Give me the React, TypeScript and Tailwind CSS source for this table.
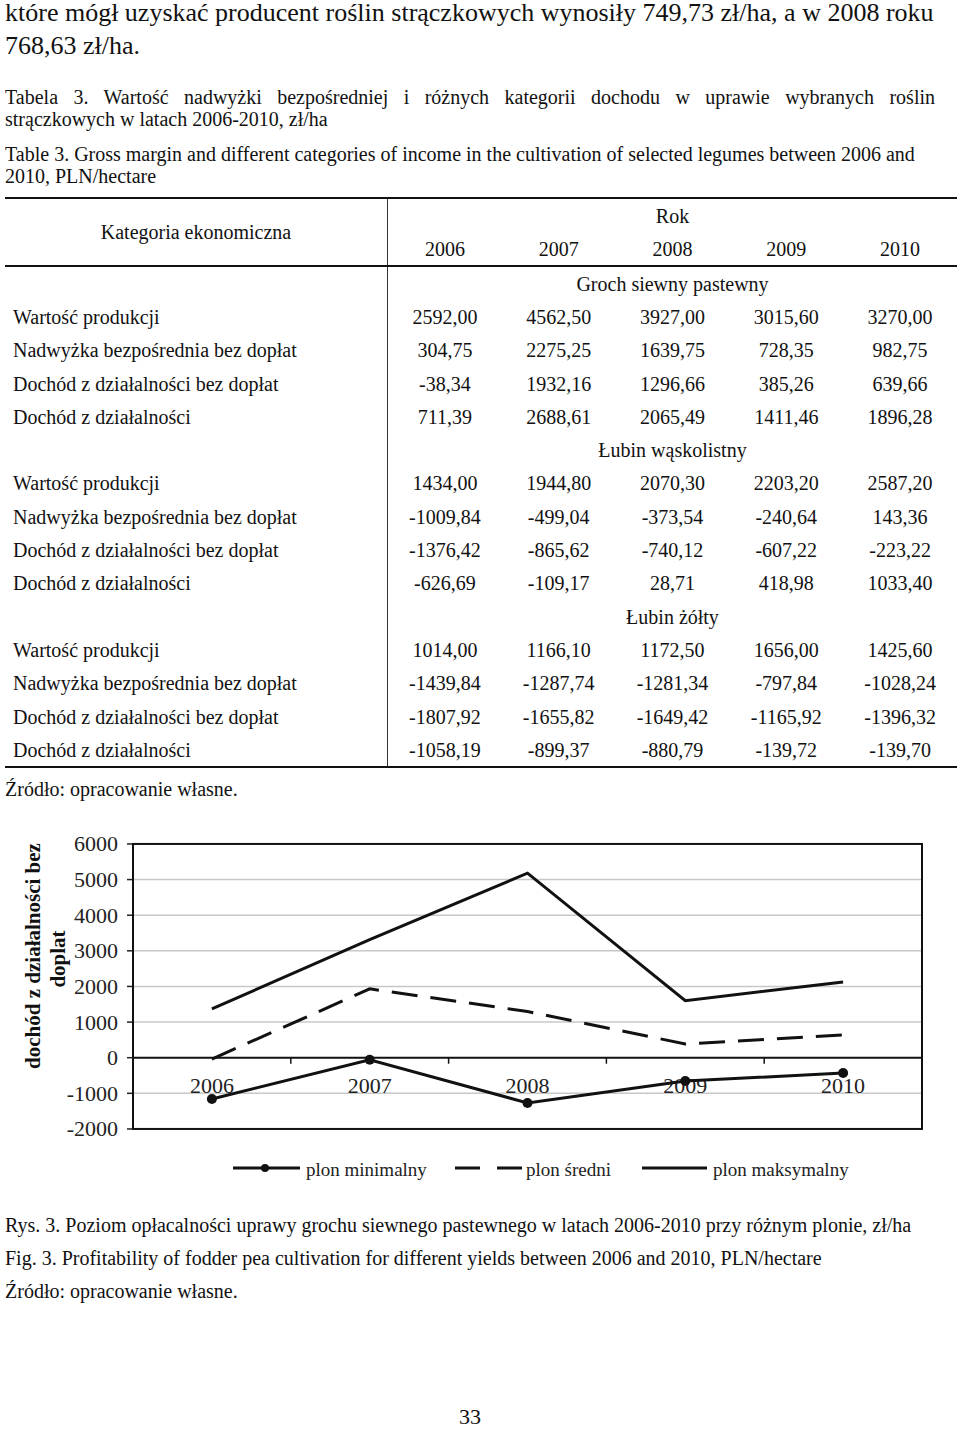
import React from "react";

const groups: { title: string; rows: string[][] }[] = [
  {
    title: "Groch siewny pastewny",
    rows: [
      ["Wartość produkcji", "2592,00", "4562,50", "3927,00", "3015,60", "3270,00"],
      ["Nadwyżka bezpośrednia bez dopłat", "304,75", "2275,25", "1639,75", "728,35", "982,75"],
      ["Dochód z działalności bez dopłat", "-38,34", "1932,16", "1296,66", "385,26", "639,66"],
      ["Dochód z działalności", "711,39", "2688,61", "2065,49", "1411,46", "1896,28"],
    ],
  },
  {
    title: "Łubin wąskolistny",
    rows: [
      ["Wartość produkcji", "1434,00", "1944,80", "2070,30", "2203,20", "2587,20"],
      ["Nadwyżka bezpośrednia bez dopłat", "-1009,84", "-499,04", "-373,54", "-240,64", "143,36"],
      ["Dochód z działalności bez dopłat", "-1376,42", "-865,62", "-740,12", "-607,22", "-223,22"],
      ["Dochód z działalności", "-626,69", "-109,17", "28,71", "418,98", "1033,40"],
    ],
  },
  {
    title: "Łubin żółty",
    rows: [
      ["Wartość produkcji", "1014,00", "1166,10", "1172,50", "1656,00", "1425,60"],
      ["Nadwyżka bezpośrednia bez dopłat", "-1439,84", "-1287,74", "-1281,34", "-797,84", "-1028,24"],
      ["Dochód z działalności bez dopłat", "-1807,92", "-1655,82", "-1649,42", "-1165,92", "-1396,32"],
      ["Dochód z działalności", "-1058,19", "-899,37", "-880,79", "-139,72", "-139,70"],
    ],
  },
];

const years = ["2006", "2007", "2008", "2009", "2010"];

function Chart() {
  const left = 133;
  const right = 922;
  const y0 = 1058.7;
  const k = 285 / 8000;
  const yv = (v: number) => y0 - v * k;
  const cw = (right - left) / 5;
  const cx = (i: number) => left + cw * (i + 0.5);
  const maxS = [1368, 3315, 5180, 1600, 2126];
  const meanS = [-38, 1932, 1297, 385, 640];
  const minS = [-1160, -56, -1270, -655, -430];
  const pts = (s: number[]) => s.map((v, i) => `${cx(i)},${yv(v)}`).join(" ");
  const grid = [5000, 4000, 3000, 2000, 1000, -1000];
  const labels = [6000, 5000, 4000, 3000, 2000, 1000, 0, -1000, -2000];
  const font = "'Liberation Serif', 'Times New Roman', serif";
  return (
    <svg width="960" height="370" viewBox="0 825 960 370" className="block">
      {grid.map((g) => (
        <line key={g} x1={left} x2={right} y1={yv(g)} y2={yv(g)} stroke="#c8c8c8" strokeWidth="1.5" />
      ))}
      {labels.map((g) => (
        <line key={"t" + g} x1={left - 6} x2={left} y1={yv(g)} y2={yv(g)} stroke="#222" strokeWidth="1.5" />
      ))}
      <line x1={left} x2={right} y1={yv(0)} y2={yv(0)} stroke="#111" strokeWidth="2" />
      {[1, 2, 3, 4].map((i) => (
        <line key={"x" + i} x1={left + cw * i} x2={left + cw * i} y1={yv(0)} y2={yv(0) + 6} stroke="#111" strokeWidth="1.5" />
      ))}
      <rect x={left} y={yv(6000)} width={right - left} height={yv(-2000) - yv(6000)} fill="none" stroke="#111" strokeWidth="2" />
      {labels.map((g) => (
        <text key={"l" + g} x={118} y={yv(g)} textAnchor="end" dominantBaseline="central" fontFamily={font} fontSize="22" fill="#222">
          {g}
        </text>
      ))}
      {years.map((y, i) => (
        <text key={y} x={cx(i)} y={1086} textAnchor="middle" dominantBaseline="central" fontFamily={font} fontSize="22" fill="#222">
          {y}
        </text>
      ))}
      <polyline points={pts(maxS)} fill="none" stroke="#111" strokeWidth="3" strokeLinejoin="miter" />
      <polyline points={pts(meanS)} fill="none" stroke="#111" strokeWidth="3" strokeDasharray="26 13" />
      <polyline points={pts(minS)} fill="none" stroke="#111" strokeWidth="3" />
      {minS.map((v, i) => (
        <circle key={"c" + i} cx={cx(i)} cy={yv(v)} r="5" fill="#111" />
      ))}
      <text
        transform="translate(33 957) rotate(-90)"
        textAnchor="middle"
        dominantBaseline="central"
        fontFamily={font}
        fontSize="21"
        fontWeight="bold"
        fill="#111"
      >
        dochód z działalności bez
      </text>
      <text
        transform="translate(58 960) rotate(-90)"
        textAnchor="middle"
        dominantBaseline="central"
        fontFamily={font}
        fontSize="21"
        fontWeight="bold"
        fill="#111"
      >
        doplat
      </text>
      <line x1="233" x2="300" y1="1169" y2="1169" stroke="#111" strokeWidth="3" />
      <circle cx="265" cy="1169" r="4" fill="#111" />
      <text x="306" y="1170" dominantBaseline="central" fontFamily={font} fontSize="19" fill="#222">
        plon minimalny
      </text>
      <line x1="455" x2="480" y1="1169" y2="1169" stroke="#111" strokeWidth="3" />
      <line x1="497" x2="522" y1="1169" y2="1169" stroke="#111" strokeWidth="3" />
      <text x="526" y="1170" dominantBaseline="central" fontFamily={font} fontSize="19" fill="#222">
        plon średni
      </text>
      <line x1="642" x2="707" y1="1169" y2="1169" stroke="#111" strokeWidth="3" />
      <text x="713" y="1170" dominantBaseline="central" fontFamily={font} fontSize="19" fill="#222">
        plon maksymalny
      </text>
    </svg>
  );
}

export default function App() {
  return (
    <div className="w-[960px] h-[1430px] overflow-hidden bg-white text-[#111] font-['Liberation_Serif','Times_New_Roman',serif]">
      <div className="px-[5px] text-[26px]">
        <div className="whitespace-nowrap leading-[26px]">które mógł uzyskać producent roślin strączkowych wynosiły 749,73 zł/ha, a w 2008 roku</div>
        <div className="mt-[3px] leading-[33px]">768,63 zł/ha.</div>
      </div>

      <div className="px-[5px] mt-[24px] text-[20px] leading-[22px]">
        <div className="text-justify [text-align-last:justify] pr-[20px] whitespace-nowrap">
          Tabela 3. Wartość nadwyżki bezpośredniej i różnych kategorii dochodu w uprawie wybranych roślin
        </div>
        <div>strączkowych w latach 2006-2010, zł/ha</div>
      </div>

      <div className="px-[5px] mt-[13px] text-[20px] leading-[22px]">
        <div className="whitespace-nowrap">Table 3. Gross margin and different categories of income in the cultivation of selected legumes between 2006 and</div>
        <div>2010, PLN/hectare</div>
      </div>

      <div className="ml-[5px] mt-[10px] w-[952px] border-t-2 border-b-2 border-[#111] text-[20px]">
        <div className="grid grid-cols-[383px_1fr] border-b-2 border-[#111]">
          <div className="flex items-center justify-center border-r border-[#333] h-[66px]">Kategoria ekonomiczna</div>
          <div>
            <div className="h-[33px] flex items-center justify-center">Rok</div>
            <div className="h-[33px] grid grid-cols-5">
              {years.map((y) => (
                <div key={y} className="flex items-center justify-center">
                  {y}
                </div>
              ))}
            </div>
          </div>
        </div>
        {groups.map((g) => (
          <div key={g.title}>
            <div className="grid grid-cols-[383px_1fr] h-[33.3px]">
              <div className="border-r border-[#333]" />
              <div className="flex items-center justify-center">{g.title}</div>
            </div>
            {g.rows.map((r, ri) => (
              <div key={ri} className="grid grid-cols-[383px_repeat(5,1fr)] h-[33.3px]">
                <div className="border-r border-[#333] flex items-center pl-[8px] whitespace-nowrap">{r[0]}</div>
                {r.slice(1).map((v, vi) => (
                  <div key={vi} className="flex items-center justify-center">
                    {v}
                  </div>
                ))}
              </div>
            ))}
          </div>
        ))}
      </div>

      <div className="px-[5px] mt-[10px] text-[20px] leading-[22px]">Źródło: opracowanie własne.</div>

      <div className="mt-[24px]">
        <Chart />
      </div>

      <div className="px-[5px] mt-[15px] text-[20px] leading-[33px]">
        <div className="whitespace-nowrap">Rys. 3. Poziom opłacalności uprawy grochu siewnego pastewnego w latach 2006-2010 przy różnym plonie, zł/ha</div>
        <div>Fig. 3. Profitability of fodder pea cultivation for different yields between 2006 and 2010, PLN/hectare</div>
        <div>Źródło: opracowanie własne.</div>
      </div>

      <div className="mt-[97px] flex justify-center pr-[20px] text-[22px] leading-[24px]">33</div>
    </div>
  );
}
